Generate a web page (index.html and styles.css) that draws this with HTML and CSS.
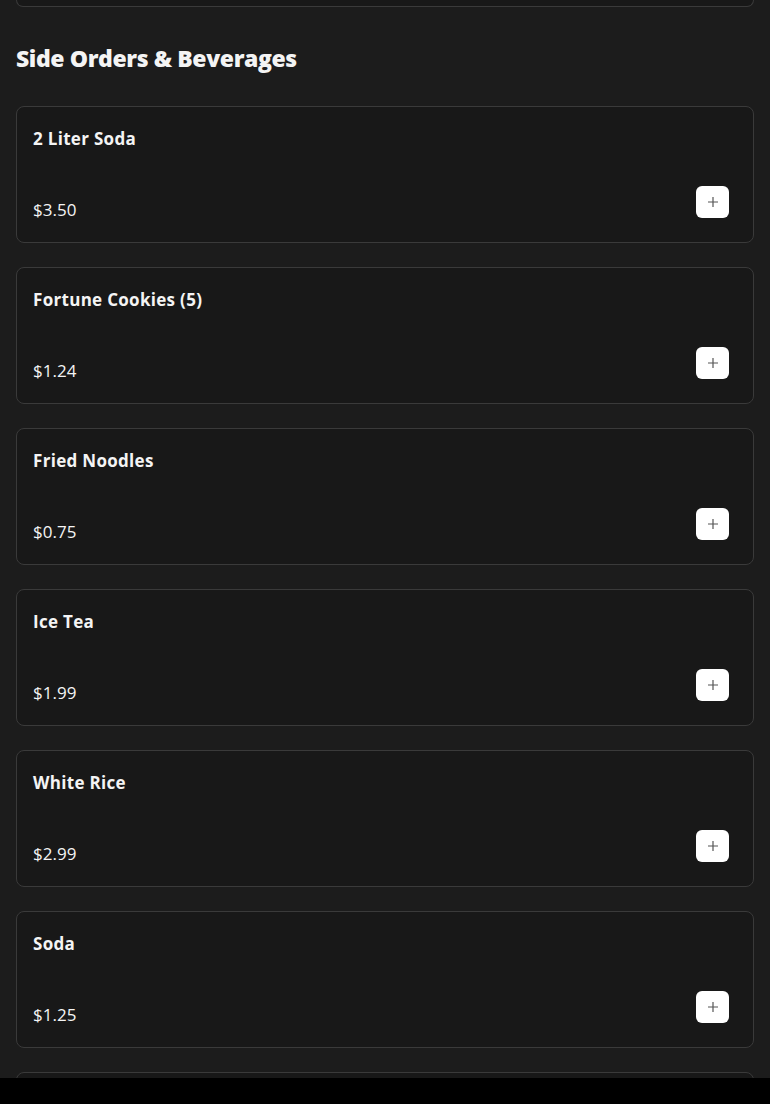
FILE: index.html
```html
<!DOCTYPE html>
<html lang="en">
<head>
  <meta charset="UTF-8" />
  <title>Side Orders &amp; Beverages</title>
  <link rel="stylesheet" href="styles.css">
</head>
<body>

  <div class="card-tail"></div>

  <h2 class="section-title">Side Orders &amp; Beverages</h2>

  <div class="menu-list">
    <div class="item">
      <div class="item-name">2 Liter Soda</div>
      <div class="item-bottom">
        <span class="item-price">$3.50</span>
        <button class="add-btn" aria-label="Add"><svg width="12" height="12" viewBox="0 0 12 12"><path d="M6 1v10M1 6h10" stroke="#555" stroke-width="1.2"/></svg></button>
      </div>
    </div>
    <div class="item">
      <div class="item-name">Fortune Cookies (5)</div>
      <div class="item-bottom">
        <span class="item-price">$1.24</span>
        <button class="add-btn" aria-label="Add"><svg width="12" height="12" viewBox="0 0 12 12"><path d="M6 1v10M1 6h10" stroke="#555" stroke-width="1.2"/></svg></button>
      </div>
    </div>
    <div class="item">
      <div class="item-name">Fried Noodles</div>
      <div class="item-bottom">
        <span class="item-price">$0.75</span>
        <button class="add-btn" aria-label="Add"><svg width="12" height="12" viewBox="0 0 12 12"><path d="M6 1v10M1 6h10" stroke="#555" stroke-width="1.2"/></svg></button>
      </div>
    </div>
    <div class="item">
      <div class="item-name">Ice Tea</div>
      <div class="item-bottom">
        <span class="item-price">$1.99</span>
        <button class="add-btn" aria-label="Add"><svg width="12" height="12" viewBox="0 0 12 12"><path d="M6 1v10M1 6h10" stroke="#555" stroke-width="1.2"/></svg></button>
      </div>
    </div>
    <div class="item">
      <div class="item-name">White Rice</div>
      <div class="item-bottom">
        <span class="item-price">$2.99</span>
        <button class="add-btn" aria-label="Add"><svg width="12" height="12" viewBox="0 0 12 12"><path d="M6 1v10M1 6h10" stroke="#555" stroke-width="1.2"/></svg></button>
      </div>
    </div>
    <div class="item">
      <div class="item-name">Soda</div>
      <div class="item-bottom">
        <span class="item-price">$1.25</span>
        <button class="add-btn" aria-label="Add"><svg width="12" height="12" viewBox="0 0 12 12"><path d="M6 1v10M1 6h10" stroke="#555" stroke-width="1.2"/></svg></button>
      </div>
    </div>
    <div class="item"></div>
  </div>

  <div class="bottom-bar"></div>

</body>
</html>
```

FILE: styles.css
```css
body {
  font-family: "Open Sans", "Noto Sans", sans-serif;
  background: #1c1c1c;
  color: #f4f4f4;
  margin: 0;
  padding: 0 16px;
}

.card-tail {
  height: 6px;
  border: 1px solid #3a3a3a;
  border-top: none;
  border-radius: 0 0 8px 8px;
  background: #181818;
}

.section-title {
  font-family: "Open Sans", sans-serif;
  font-size: 23px;
  font-weight: 800;
  letter-spacing: -0.4px;
  margin: 35px 0 0;
  line-height: 32px;
}

.menu-list {
  display: flex;
  flex-direction: column;
  gap: 24px;
  margin-top: 32px;
}

.item {
  background: #181818;
  border: 1px solid #3a3a3a;
  border-radius: 8px;
  padding: 20px 24px 24px 16px;
  height: 137px;
  box-sizing: border-box;
  display: flex;
  flex-direction: column;
  justify-content: space-between;
}

.item-name {
  font-size: 17px;
  font-weight: 700;
  letter-spacing: 0.3px;
  line-height: 24px;
}

.item-bottom {
  display: flex;
  justify-content: space-between;
  align-items: flex-end;
}

.item-price {
  font-size: 17px;
  line-height: 22px;
  margin-bottom: -3px;
}

.add-btn {
  width: 33px;
  height: 32px;
  border: none;
  border-radius: 6px;
  background: #fff;
  display: flex;
  align-items: center;
  justify-content: center;
  padding: 0;
  cursor: pointer;
}

.bottom-bar {
  position: fixed;
  left: 0;
  right: 0;
  bottom: 0;
  height: 26px;
  background: #000;
}
```
